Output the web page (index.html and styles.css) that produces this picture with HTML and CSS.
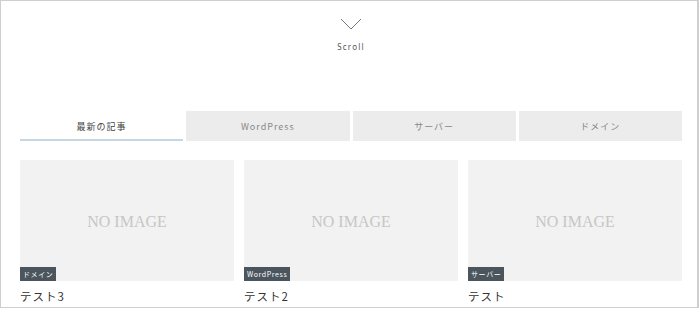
FILE: index.html
```html
<!DOCTYPE html>
<html lang="ja">
<head>
<meta charset="utf-8">
<link rel="stylesheet" href="styles.css">
</head>
<body>
<div class="frame">
  <div class="scroll">
    <svg class="chev" width="22" height="12" viewBox="0 0 22 12"><path d="M1 1 L11 11 L21 1" fill="none" stroke="#777" stroke-width="1"/></svg>
    <div class="scroll-label">Scroll</div>
  </div>
  <div class="tabs">
    <div class="tab active">最新の記事</div>
    <div class="tab">WordPress</div>
    <div class="tab">サーバー</div>
    <div class="tab">ドメイン</div>
  </div>
  <div class="cards">
    <div class="card">
      <div class="thumb"><span class="noimg">NO IMAGE</span><span class="badge">ドメイン</span></div>
      <div class="title">テスト3</div>
    </div>
    <div class="card">
      <div class="thumb"><span class="noimg">NO IMAGE</span><span class="badge">WordPress</span></div>
      <div class="title">テスト2</div>
    </div>
    <div class="card">
      <div class="thumb"><span class="noimg">NO IMAGE</span><span class="badge">サーバー</span></div>
      <div class="title">テスト</div>
    </div>
  </div>
</div>
</body>
</html>
```
FILE: styles.css
```css
html, body { margin: 0; padding: 0; background: #fff; }
body { font-family: "Noto Sans CJK JP", "Noto Sans", sans-serif; overflow: hidden; }
.frame {
  box-sizing: border-box;
  width: 699px;
  height: 308px;
  border: 1px solid #cfcfcf;
  border-right-width: 2px;
  overflow: hidden;
  padding: 0 15px 0 19px;
}
.scroll { display: flex; flex-direction: column; align-items: center; padding-top: 17px; height: 94px; box-sizing: border-box; }
.chev { display: block; }
.scroll-label { margin-top: 12px; font-size: 8px; letter-spacing: 1.2px; color: #555; line-height: 10px; font-family: "Noto Sans", sans-serif; }
.tabs { display: flex; gap: 3px; height: 30px; margin-top: 16px; }
.tab {
  flex: 1; background: #ececec; display: flex; align-items: center; justify-content: center;
  font-size: 9px; letter-spacing: 1px; color: #888; box-sizing: border-box;
}
.tab.active { background: #fff; color: #444; border-bottom: 2px solid #c5d6e4; padding-top: 2px; }
.cards { display: flex; gap: 10px; margin-top: 19px; }
.card { flex: 1; }
.thumb { position: relative; height: 121px; background: #f2f2f2; display: flex; align-items: center; justify-content: center; }
.noimg { font-family: "Liberation Serif", serif; font-size: 16px; color: #c6c6c6; padding-top: 2px; }
.badge {
  position: absolute; left: 0; bottom: 0; background: #4a555e; color: #fff;
  font-size: 7px; line-height: 14px; padding: 0 3px; letter-spacing: 0.6px;
}
.title { margin-top: 7px; font-size: 11.5px; color: #333; line-height: 16px; letter-spacing: 1px; }
```
